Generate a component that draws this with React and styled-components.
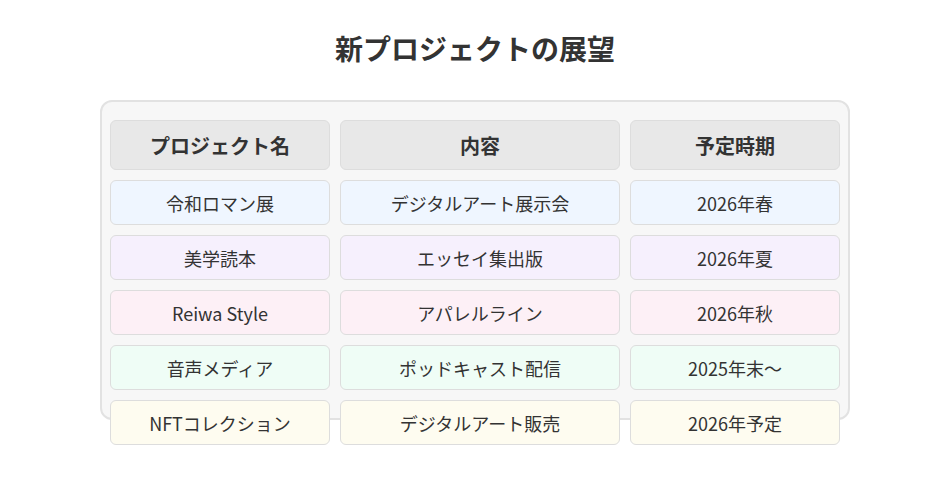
import React from "react";
import styled, { createGlobalStyle } from "styled-components";

const GlobalStyle = createGlobalStyle`
  body {
    margin: 0;
    background: #ffffff;
    font-family: "Noto Sans CJK JP", "Noto Sans", sans-serif;
    color: #333333;
  }
`;

const Page = styled.div`
  width: 950px;
  height: 500px;
  padding-top: 28px;
  box-sizing: border-box;
`;

const Title = styled.h1`
  margin: 0 0 32px;
  text-align: center;
  font-size: 28px;
  line-height: 40px;
  font-weight: 700;
  color: #333333;
`;

const Board = styled.div`
  width: 750px;
  height: 320px;
  margin: 0 auto;
  box-sizing: border-box;
  padding: 18px 8px;
  background: #f7f7f7;
  border: 2px solid #e2e2e2;
  border-radius: 12px;
`;

const Grid = styled.div`
  display: grid;
  grid-template-columns: 220px 280px 210px;
  grid-auto-rows: 45px;
  grid-template-rows: 50px;
  gap: 10px;
`;

const Cell = styled.div`
  display: flex;
  align-items: center;
  justify-content: center;
  box-sizing: border-box;
  border: 1px solid #dddddd;
  border-radius: 6px;
  background: ${(p) => p.$bg};
  font-size: ${(p) => (p.$head ? "20px" : "18px")};
  font-weight: ${(p) => (p.$head ? 700 : 400)};
  color: #333333;
`;

const header = ["プロジェクト名", "内容", "予定時期"];

const rows = [
  { bg: "#eff6ff", cells: ["令和ロマン展", "デジタルアート展示会", "2026年春"] },
  { bg: "#f6f0fd", cells: ["美学読本", "エッセイ集出版", "2026年夏"] },
  { bg: "#fdf0f6", cells: ["Reiwa Style", "アパレルライン", "2026年秋"] },
  { bg: "#effdf6", cells: ["音声メディア", "ポッドキャスト配信", "2025年末〜"] },
  { bg: "#fefcf0", cells: ["NFTコレクション", "デジタルアート販売", "2026年予定"] },
];

export default function App() {
  return (
    <Page>
      <GlobalStyle />
      <Title>新プロジェクトの展望</Title>
      <Board>
        <Grid>
          {header.map((h) => (
            <Cell key={h} $head $bg="#e8e8e8">
              {h}
            </Cell>
          ))}
          {rows.map((r) =>
            r.cells.map((c) => (
              <Cell key={c} $bg={r.bg}>
                {c}
              </Cell>
            ))
          )}
        </Grid>
      </Board>
    </Page>
  );
}
